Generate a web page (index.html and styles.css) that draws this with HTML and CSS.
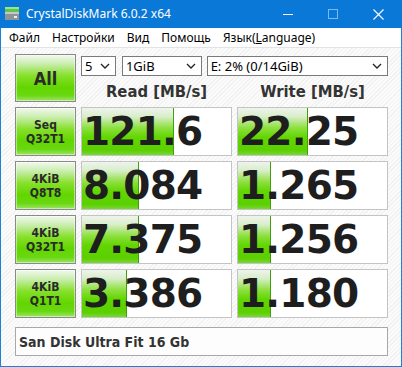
FILE: index.html
```html
<!DOCTYPE html>
<html lang="ru">
<head>
    <meta charset="UTF-8">
    <title>CrystalDiskMark 6.0.2 x64</title>
    <link rel="stylesheet" href="styles.css">
</head>
<body>
<div class="window">
    <div class="titlebar">
        <svg class="app-icon" width="16" height="16" viewBox="0 0 16 16">
            <rect x="1" y="1" width="14" height="5" fill="#5cc84a"/>
            <rect x="1" y="1" width="14" height="2" fill="#9be38c"/>
            <rect x="1" y="6" width="14" height="8" fill="#8e9498"/>
            <rect x="1" y="6" width="14" height="2" fill="#c4c8cb"/>
            <rect x="10" y="10" width="3" height="2" fill="#e8f6e0"/>
        </svg>
        <span class="title">CrystalDiskMark 6.0.2 x64</span>
        <div class="controls">
            <span class="ctl"><svg width="10" height="10" viewBox="0 0 10 10"><path d="M0 5.5h10" stroke="#fff" stroke-width="1"/></svg></span>
            <span class="ctl"><svg width="10" height="10" viewBox="0 0 10 10"><rect x="0.5" y="0.5" width="9" height="9" fill="none" stroke="#7fb8ea" stroke-width="1"/></svg></span>
            <span class="ctl"><svg width="11" height="11" viewBox="0 0 11 11"><path d="M0.5 0.5l10 10M10.5 0.5l-10 10" stroke="#fff" stroke-width="1.1"/></svg></span>
        </div>
    </div>

    <div class="menubar">
        <span class="menu-item">Файл</span>
        <span class="menu-item">Настройки</span>
        <span class="menu-item">Вид</span>
        <span class="menu-item">Помощь</span>
        <span class="menu-item">Язык(<u>L</u>anguage)</span>
    </div>

    <div class="main">
        <div class="grid">
            <div class="btn all">All</div>
            <div class="top">
                <div class="selects">
                    <div class="sel sel-count">5<svg width="10" height="6" viewBox="0 0 10 6"><path d="M1 1l4 4 4-4" fill="none" stroke="#222" stroke-width="1.3"/></svg></div>
                    <div class="sel sel-size">1GiB<svg width="10" height="6" viewBox="0 0 10 6"><path d="M1 1l4 4 4-4" fill="none" stroke="#222" stroke-width="1.3"/></svg></div>
                    <div class="sel sel-drive">E: 2% (0/14GiB)<svg width="10" height="6" viewBox="0 0 10 6"><path d="M1 1l4 4 4-4" fill="none" stroke="#222" stroke-width="1.3"/></svg></div>
                </div>
                <div class="heads">
                    <div class="head">Read [MB/s]</div>
                    <div class="head">Write [MB/s]</div>
                </div>
            </div>

            <div class="btn label">Seq<br>Q32T1</div>
            <div class="value" style="--w: 92px">121.6</div>
            <div class="value" style="--w: 70px">22.25</div>

            <div class="btn label">4KiB<br>Q8T8</div>
            <div class="value" style="--w: 57px">8.084</div>
            <div class="value" style="--w: 33px">1.265</div>

            <div class="btn label">4KiB<br>Q32T1</div>
            <div class="value" style="--w: 57px">7.375</div>
            <div class="value" style="--w: 33px">1.256</div>

            <div class="btn label">4KiB<br>Q1T1</div>
            <div class="value" style="--w: 45px">3.386</div>
            <div class="value" style="--w: 33px">1.180</div>
        </div>

        <div class="comment">San Disk Ultra Fit 16 Gb</div>
    </div>
</div>
</body>
</html>
```

FILE: styles.css
```css
:root{
    --accent: #0a78d7;
    --border-blue: #1883d7;
    --text-dark: #1e1e1e;
}

*{
    box-sizing: border-box;
}

body{
    margin: 0;
    font-family: "Noto Sans", sans-serif;
}

.window{
    width: 402px;
    height: 367px;
    border: 1px solid var(--border-blue);
    border-top: none;
    background: #fafafa;
    display: flex;
    flex-direction: column;
}

/* title bar */
.titlebar{
    height: 28px;
    margin: 0 -1px;
    background: var(--accent);
    display: flex;
    align-items: center;
    color: #fff;
}
.app-icon{
    margin-left: 4px;
    margin-top: -1px;
}
.title{
    margin-left: 6px;
    font-size: 12px;
    margin-top: -1px;
}
.controls{
    margin-left: auto;
    display: flex;
    height: 100%;
}
.ctl{
    width: 45px;
    display: flex;
    align-items: center;
    justify-content: center;
}
.ctl:last-child{
    width: 47px;
}

/* menu */
.menubar{
    height: 20px;
    background: #fff;
    border-bottom: 1px solid #e3e3e3;
    display: flex;
    align-items: center;
    padding-left: 2px;
    font-size: 12px;
    color: #000;
}
.menu-item{
    padding: 0 6px;
}
.menu-item u{
    text-decoration-thickness: 1px;
}

/* main area */
.main{
    flex: 1;
    padding: 6px 0 0 14px;
    background: repeating-linear-gradient(135deg, #fbfbfb 0 2px, #f1f1f1 2px 3px);
}
.grid{
    display: grid;
    grid-template-columns: 61px 151px 151px;
    grid-template-rows: 48px repeat(4, 49px);
    gap: 5px;
}

.btn{
    border: 1px solid #8a8a8a;
    background: linear-gradient(#f2f9ee 0%, #cdeeb4 18%, #86e02a 45%, #62d600 70%, #6ad812 88%, #9ee466 100%);
    box-shadow: inset 0 0 0 1px rgba(255,255,255,0.45);
    display: flex;
    align-items: center;
    justify-content: center;
    text-align: center;
    color: #2a2a2a;
    font-family: "DejaVu Sans", sans-serif;
    font-weight: bold;
}
.all{
    font-size: 18px;
    font-family: "DejaVu Sans Condensed", "DejaVu Sans", sans-serif;
    font-stretch: condensed;
}
.label{
    font-size: 12px;
    line-height: 14px;
    font-family: "DejaVu Sans Condensed", "DejaVu Sans", sans-serif;
    font-stretch: condensed;
}

.top{
    grid-column: 2 / 4;
}
.selects{
    display: flex;
    margin-top: 2px;
    height: 20px;
}
.sel{
    height: 20px;
    border: 1px solid #7a7a7a;
    background: #fff;
    display: flex;
    align-items: center;
    justify-content: space-between;
    padding: 0 5px 0 3px;
    font-size: 13px;
    color: #000;
}
.sel-count{
    width: 35px;
}
.sel-size{
    width: 80px;
    margin-left: 6px;
}
.sel-drive{
    width: 182px;
    margin-left: 5px;
}

.heads{
    display: grid;
    grid-template-columns: 151px 151px;
    column-gap: 5px;
    height: 26px;
    padding-top: 7px;
    line-height: 18px;
}
.head{
    text-align: center;
    font-family: "DejaVu Sans Condensed", "DejaVu Sans", sans-serif;
    font-stretch: condensed;
    font-weight: bold;
    font-size: 16.5px;
    color: #333;
}

.value{
    border: 1px solid #c4c4c4;
    background:
        linear-gradient(#3f9f10, #3f9f10) no-repeat calc(var(--w) - 1px) 0 / 1px 100%,
        linear-gradient(#eef4ec 0%, #d9eecb 18%, #8ee040 42%, #62d602 62%, #5ccf00 90%, #78d836 100%) no-repeat 0 0 / var(--w) 100%,
        #fff;
    display: flex;
    align-items: center;
    padding-left: 1px;
    font-family: "DejaVu Sans", sans-serif;
    font-weight: bold;
    font-size: 39px;
    letter-spacing: -0.8px;
    color: var(--text-dark);
}

.comment{
    width: 373px;
    height: 29px;
    margin-top: 9px;
    border: 1px solid #a8a8a8;
    background: #fdfdfd;
    display: flex;
    align-items: center;
    padding-left: 3px;
    font-family: "DejaVu Sans Condensed", "DejaVu Sans", sans-serif;
    font-stretch: condensed;
    font-weight: bold;
    font-size: 14px;
    color: #333;
}
```
